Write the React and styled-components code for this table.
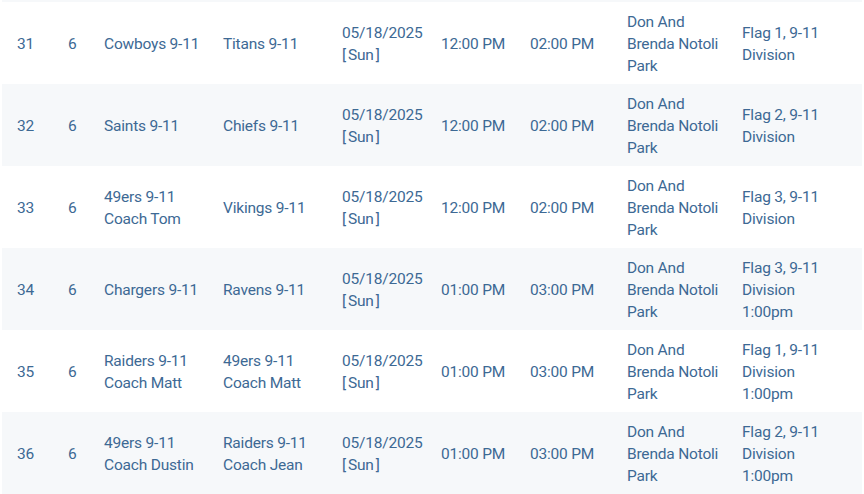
import React from 'react';
import styled, { createGlobalStyle } from 'styled-components';

const GlobalStyle = createGlobalStyle`
  body {
    margin: 0;
    background: #ffffff;
    font-family: Roboto, "Liberation Sans", sans-serif;
  }
`;

const Wrapper = styled.div`
  padding: 0 2px;
  width: 860px;
`;

const Row = styled.div`
  display: grid;
  grid-template-columns: 51px 36px 119px 119px 99px 89px 97px 115px 135px;
  height: ${(p) => (p.partial ? '2px' : '82px')};
  background: ${(p) => (p.shaded ? '#f6f8fa' : '#ffffff')};
  align-items: center;
  overflow: hidden;
`;

const Cell = styled.div`
  padding-left: 15px;
  padding-top: 1px;
  color: #3d6994;
  font-size: 15.5px;
  letter-spacing: -0.2px;
  line-height: 22px;
  white-space: pre-line;
`;

const Bracket = styled.span`
  margin: 0 2px;
`;

const games = [
  ['31', '6', 'Cowboys 9-11', 'Titans 9-11', '12:00 PM', '02:00 PM', 'Flag 1, 9-11\nDivision'],
  ['32', '6', 'Saints 9-11', 'Chiefs 9-11', '12:00 PM', '02:00 PM', 'Flag 2, 9-11\nDivision'],
  ['33', '6', '49ers 9-11\nCoach Tom', 'Vikings 9-11', '12:00 PM', '02:00 PM', 'Flag 3, 9-11\nDivision'],
  ['34', '6', 'Chargers 9-11', 'Ravens 9-11', '01:00 PM', '03:00 PM', 'Flag 3, 9-11\nDivision\n1:00pm'],
  ['35', '6', 'Raiders 9-11\nCoach Matt', '49ers 9-11\nCoach Matt', '01:00 PM', '03:00 PM', 'Flag 1, 9-11\nDivision\n1:00pm'],
  ['36', '6', '49ers 9-11\nCoach Dustin', 'Raiders 9-11\nCoach Jean', '01:00 PM', '03:00 PM', 'Flag 2, 9-11\nDivision\n1:00pm'],
];

export default function App() {
  return (
    <Wrapper>
      <GlobalStyle />
      <Row partial shaded />
      {games.map((g, i) => (
        <Row key={g[0]} shaded={i % 2 === 1}>
          <Cell>{g[0]}</Cell>
          <Cell>{g[1]}</Cell>
          <Cell>{g[2]}</Cell>
          <Cell>{g[3]}</Cell>
          <Cell>
            {'05/18/2025\n'}
            [<Bracket>Sun</Bracket>]
          </Cell>
          <Cell>{g[4]}</Cell>
          <Cell>{g[5]}</Cell>
          <Cell>{'Don And\nBrenda Notoli\nPark'}</Cell>
          <Cell>{g[6]}</Cell>
        </Row>
      ))}
    </Wrapper>
  );
}
